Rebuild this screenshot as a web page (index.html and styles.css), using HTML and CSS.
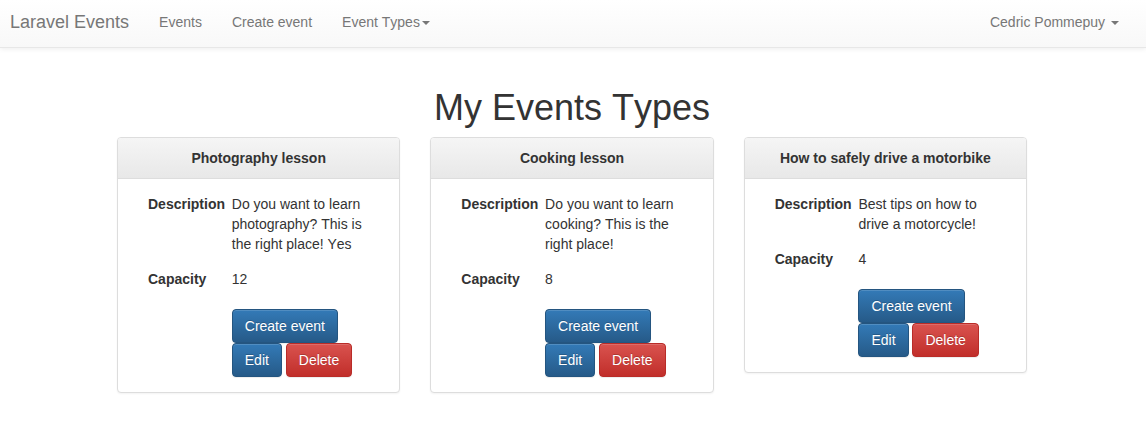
FILE: index.html
```html
<!DOCTYPE html>
<html lang="en">
<head>
<meta charset="utf-8">
<meta name="viewport" content="width=device-width, initial-scale=1">
<title>Laravel Events</title>
<link rel="stylesheet" href="styles.css">
</head>
<body>
<nav class="navbar">
  <a class="navbar-brand" href="#">Laravel Events</a>
  <ul class="navbar-menu">
    <li><a class="nav-link" href="#">Events</a></li>
    <li><a class="nav-link" href="#">Create event</a></li>
    <li><button class="nav-link" type="button" aria-haspopup="true">Event Types<span class="caret"></span></button></li>
  </ul>
  <ul class="navbar-menu navbar-user">
    <li><button class="nav-link" type="button" aria-haspopup="true">Cedric Pommepuy <span class="caret"></span></button></li>
  </ul>
</nav>
<main class="page">
  <h1 class="page-title">My Events Types</h1>
  <div class="panels">
    <section class="panel">
      <h2 class="panel-heading">Photography lesson</h2>
      <div class="panel-body">
        <dl class="details">
          <div class="details-row"><dt>Description</dt><dd>Do you want to learn photography? This is the right place! Yes</dd></div>
          <div class="details-row"><dt>Capacity</dt><dd>12</dd></div>
        </dl>
        <div class="actions">
          <a class="btn btn-primary" href="#">Create event</a>
          <a class="btn btn-primary" href="#">Edit</a>
          <button class="btn btn-danger" type="button">Delete</button>
        </div>
      </div>
    </section>
    <section class="panel">
      <h2 class="panel-heading">Cooking lesson</h2>
      <div class="panel-body">
        <dl class="details">
          <div class="details-row"><dt>Description</dt><dd>Do you want to learn cooking? This is the right place!</dd></div>
          <div class="details-row"><dt>Capacity</dt><dd>8</dd></div>
        </dl>
        <div class="actions">
          <a class="btn btn-primary" href="#">Create event</a>
          <a class="btn btn-primary" href="#">Edit</a>
          <button class="btn btn-danger" type="button">Delete</button>
        </div>
      </div>
    </section>
    <section class="panel">
      <h2 class="panel-heading">How to safely drive a motorbike</h2>
      <div class="panel-body">
        <dl class="details">
          <div class="details-row"><dt>Description</dt><dd>Best tips on how to drive a motorcycle!</dd></div>
          <div class="details-row"><dt>Capacity</dt><dd>4</dd></div>
        </dl>
        <div class="actions">
          <a class="btn btn-primary" href="#">Create event</a>
          <a class="btn btn-primary" href="#">Edit</a>
          <button class="btn btn-danger" type="button">Delete</button>
        </div>
      </div>
    </section>
  </div>
</main>
</body>
</html>
```
FILE: styles.css
```css
* {
  box-sizing: border-box;
}

body {
  margin: 0;
  background: #fff;
  color: #333;
  font-family: "Liberation Sans", Arial, sans-serif;
  font-size: 14px;
  font-kerning: none;
  line-height: 20px;
}

.navbar {
  display: flex;
  flex-wrap: wrap;
  padding: 0 12px 0 10px;
  border-bottom: 1px solid #e7e7e7;
  background: linear-gradient(to bottom, #fff 0, #f8f8f8 100%);
  box-shadow: 0 1px 5px rgba(0, 0, 0, .075);
}

.navbar-brand,
.nav-link {
  display: block;
  padding: 12px 15px 15px;
  border: 0;
  background: none;
  color: #777;
  font: inherit;
  font-kerning: none;
  text-decoration: none;
  text-shadow: 0 1px 0 rgba(255, 255, 255, .25);
}

.navbar-brand {
  padding-left: 0;
  font-size: 18px;
}

.navbar-menu {
  display: flex;
  flex-wrap: wrap;
  margin: 0;
  padding: 0;
  list-style: none;
}

.navbar-user {
  margin-left: auto;
}

.nav-link {
  cursor: pointer;
}

.caret {
  display: inline-block;
  width: 0;
  height: 0;
  margin-left: 2px;
  vertical-align: middle;
  border-top: 4px solid;
  border-right: 4px solid transparent;
  border-left: 4px solid transparent;
}

.page {
  max-width: 942px;
  margin: 0 auto;
  padding: 39px 17px 20px 15px;
}

.page-title {
  margin: 0 0 8px;
  font-size: 36px;
  font-weight: 500;
  line-height: 42px;
  text-align: center;
}

.panels {
  display: grid;
  grid-template-columns: repeat(auto-fit, minmax(260px, 1fr));
  gap: 30px;
  align-items: start;
}

.panel {
  border: 1px solid #ddd;
  border-radius: 4px;
  background: #fff;
  box-shadow: 0 1px 2px rgba(0, 0, 0, .05);
}

.panel-heading {
  margin: 0;
  padding: 10px 15px;
  border-bottom: 1px solid #ddd;
  border-radius: 3px 3px 0 0;
  background: linear-gradient(to bottom, #f5f5f5 0, #e8e8e8 100%);
  font-size: 14px;
  font-weight: 700;
  text-align: center;
}

.panel-body {
  padding: 15px;
}

.details {
  display: grid;
  gap: 15px;
  margin: 0 0 20px;
}

.details-row {
  display: grid;
  grid-template-columns: minmax(0, 1fr) minmax(0, 2fr);
}

.details dt,
.details dd {
  margin: 0;
  padding: 0 15px;
}

.details dt {
  font-weight: 700;
}

.actions {
  margin-left: 33.333%;
  padding: 0 15px;
}

.btn {
  display: inline-block;
  padding: 6px 12px;
  border: 1px solid;
  border-radius: 4px;
  box-shadow: inset 0 1px 0 rgba(255, 255, 255, .15), 0 1px 1px rgba(0, 0, 0, .075);
  color: #fff;
  font: inherit;
  text-align: center;
  text-decoration: none;
  text-shadow: 0 -1px 0 rgba(0, 0, 0, .2);
  vertical-align: middle;
  white-space: nowrap;
  cursor: pointer;
}

.btn-primary {
  border-color: #245580;
  background: #265a88 linear-gradient(to bottom, #337ab7 0, #265a88 100%);
}

.btn-danger {
  border-color: #b92c28;
  background: #c12e2a linear-gradient(to bottom, #d9534f 0, #c12e2a 100%);
}
```
